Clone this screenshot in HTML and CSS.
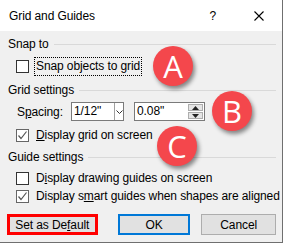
FILE: index.html
```html
<!DOCTYPE html>
<html lang="en">
<head>
    <meta charset="UTF-8">
    <title>Grid and Guides</title>
    <link rel="stylesheet" href="styles.css">
</head>
<body>

<div class="dialog">
    <div class="titlebar">
        <span class="title">Grid and Guides</span>
        <span class="help">?</span>
        <svg class="close" width="10" height="10" viewBox="0 0 10 10">
            <path d="M0.5 0.5 L9.5 9.5 M9.5 0.5 L0.5 9.5" stroke="#000" stroke-width="1.1"/>
        </svg>
    </div>

    <div class="content">
        <div class="group-title first"><span>Snap to</span></div>
        <div class="check-row row-snap">
            <span class="box"></span>
            <span class="label focus">Snap objects to <u>g</u>rid</span>
        </div>

        <div class="group-title grid-title"><span>Grid settings</span></div>
        <div class="spacing-row">
            <span class="label">S<u>p</u>acing:</span>
            <div class="combo">
                <span class="value">1/12"</span>
                <span class="arrow">
                    <svg width="7" height="4" viewBox="0 0 7 4"><path d="M0.5 0.5 L3.5 3.5 L6.5 0.5" fill="none" stroke="#333" stroke-width="1"/></svg>
                </span>
            </div>
            <div class="spinner">
                <span class="value">0.08"</span>
                <span class="spin">
                    <span class="spin-btn"><svg width="7" height="4" viewBox="0 0 7 4"><path d="M0 4 L3.5 0 L7 4 Z" fill="#222"/></svg></span>
                    <span class="spin-btn"><svg width="7" height="4" viewBox="0 0 7 4"><path d="M0 0 L3.5 4 L7 0 Z" fill="#222"/></svg></span>
                </span>
            </div>
        </div>
        <div class="check-row row-display">
            <span class="box checked">
                <svg width="11" height="11" viewBox="0 0 11 11"><path d="M1.5 5.5 L4 8.5 L9.5 1.5" fill="none" stroke="#555" stroke-width="1.2"/></svg>
            </span>
            <span class="label"><u>D</u>isplay grid on screen</span>
        </div>

        <div class="group-title guide-title"><span>Guide settings</span></div>
        <div class="check-row row-drawing">
            <span class="box"></span>
            <span class="label">D<u>i</u>splay drawing guides on screen</span>
        </div>
        <div class="check-row">
            <span class="box checked">
                <svg width="11" height="11" viewBox="0 0 11 11"><path d="M1.5 5.5 L4 8.5 L9.5 1.5" fill="none" stroke="#555" stroke-width="1.2"/></svg>
            </span>
            <span class="label">Display s<u>m</u>art guides when shapes are aligned</span>
        </div>

        <div class="buttons">
            <button class="btn btn-default">Set as De<u>f</u>ault</button>
            <button class="btn btn-ok">OK</button>
            <button class="btn btn-cancel">Cancel</button>
        </div>
    </div>

    <div class="marker marker-a">A</div>
    <div class="marker marker-b">B</div>
    <div class="marker marker-c">C</div>
</div>

</body>
</html>
```

FILE: styles.css
```css
body {
    margin: 0;
    padding: 0;
    background: #f0f0f0;
    font-family: "Liberation Sans", Arial, sans-serif;
    font-size: 12px;
    letter-spacing: -0.1px;
    color: #000;
}

.dialog {
    position: relative;
    width: 282px;
    height: 242px;
    background: #f0f0f0;
    border-right: 1px solid #6f6f6f;
    border-bottom: 1px solid #6f6f6f;
    overflow: hidden;
    white-space: nowrap;
}

.titlebar {
    height: 31px;
    background: #fff;
    display: flex;
    align-items: center;
}

.title {
    margin-left: 9px;
    flex: 1;
}

.help {
    margin-right: 38px;
}

.close {
    margin-right: 18px;
}

.content {
    padding: 5px 6px 0 8px;
}

.group-title {
    display: flex;
    align-items: center;
    height: 16px;
}

.group-title::after {
    content: "";
    flex: 1;
    margin-left: 5px;
    border-top: 1px solid #d9d9d9;
}

.grid-title { margin-top: 7px; }
.guide-title { margin-top: 5px; }

.check-row {
    display: flex;
    align-items: center;
    height: 18px;
    padding-left: 8px;
}

.row-snap { margin-top: 5px; }
.row-display { margin-top: 5px; }
.row-drawing { margin-top: 4px; }

.box {
    width: 11px;
    height: 11px;
    background: #fff;
    border: 1px solid #333;
    display: flex;
    align-items: center;
    justify-content: center;
}

.box.checked {
    border-color: #666;
}

.check-row .label {
    margin-left: 6px;
    padding: 0 1px;
}

.focus {
    outline: 1px dotted #000;
    line-height: 17px;
}

.spacing-row {
    display: flex;
    align-items: center;
    height: 19px;
    margin-top: 4px;
    padding-left: 9px;
}

.spacing-row .label {
    width: 54px;
}

.combo,
.spinner {
    display: flex;
    height: 17px;
    background: #fff;
    border: 1px solid #7a7a7a;
}

.combo {
    width: 51px;
}

.spinner {
    width: 69px;
    margin-left: 10px;
}

.value {
    flex: 1;
    padding-left: 2px;
    line-height: 17px;
}

.arrow {
    width: 8px;
    border-left: 1px solid #a0a0a0;
    display: flex;
    align-items: center;
    justify-content: center;
}

.spin {
    width: 15px;
    margin: 1px 1px 1px 0;
    display: flex;
    flex-direction: column;
    gap: 1px;
}

.spin-btn {
    flex: 1;
    background: #e5e5e5;
    border: 1px solid #adadad;
    display: flex;
    align-items: center;
    justify-content: center;
}

.buttons {
    display: flex;
    margin-top: 9px;
    margin-left: -1px;
}

.btn {
    font-family: inherit;
    font-size: 12px;
    letter-spacing: -0.1px;
    color: #000;
    background: #e1e1e1;
    border: 1px solid #adadad;
    height: 21px;
    padding: 0;
}

.btn-default {
    width: 91px;
    border: 3px solid #f00;
}

.btn-ok {
    width: 73px;
    margin-left: 20px;
    border: 2px solid #0078d7;
}

.btn-cancel {
    width: 75px;
    margin-left: 11px;
}

.marker {
    position: absolute;
    width: 40px;
    height: 40px;
    border-radius: 50%;
    background: #f4474c;
    color: #fff;
    font-family: "Open Sans", sans-serif;
    font-size: 31px;
    letter-spacing: 0;
    line-height: 40px;
    text-align: center;
    box-shadow: 2px 3px 4px rgba(0, 0, 0, 0.45);
}

.marker-a { left: 153px; top: 46px; }
.marker-b { left: 212px; top: 91px; }
.marker-c { left: 157px; top: 126px; }
```
